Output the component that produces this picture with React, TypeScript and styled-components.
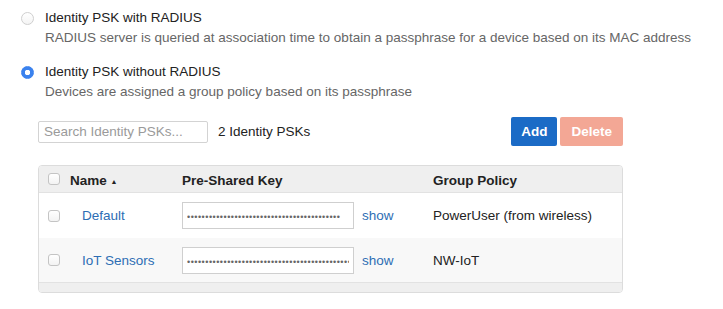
import React from "react";
import styled, { createGlobalStyle } from "styled-components";

const GlobalStyle = createGlobalStyle`
  body {
    margin: 0;
    background: #fff;
    font-family: "Liberation Sans", Arial, sans-serif;
    font-size: 13.5px;
    color: #333;
  }
`;

type Psk = { name: string; keyLength: number; policy: string };

const psks: Psk[] = [
  { name: "Default", keyLength: 42, policy: "PowerUser (from wireless)" },
  { name: "IoT Sensors", keyLength: 70, policy: "NW-IoT" },
];

function Radio({ checked }: { checked?: boolean }) {
  return <RadioDot $checked={checked} />;
}

export default function App() {
  return (
    <Page>
      <GlobalStyle />
      <Option>
        <Radio />
        <OptionText>
          <OptionLabel>Identity PSK with RADIUS</OptionLabel>
          <OptionDesc>
            RADIUS server is queried at association time to obtain a passphrase for a device based on its MAC address
          </OptionDesc>
        </OptionText>
      </Option>
      <Option $spaced>
        <Radio checked />
        <OptionText>
          <OptionLabel>Identity PSK without RADIUS</OptionLabel>
          <OptionDesc>Devices are assigned a group policy based on its passphrase</OptionDesc>
        </OptionText>
      </Option>

      <Section>
        <Toolbar>
          <SearchGroup>
            <SearchInput placeholder="Search Identity PSKs..." />
            <Count>2 Identity PSKs</Count>
          </SearchGroup>
          <Buttons>
            <Button $variant="primary">Add</Button>
            <Button $variant="danger">Delete</Button>
          </Buttons>
        </Toolbar>

        <Table>
          <HeaderRow>
            <CheckCell>
              <Checkbox />
            </CheckCell>
            <HeaderCell>
              Name <SortArrow>▲</SortArrow>
            </HeaderCell>
            <HeaderCell>Pre-Shared Key</HeaderCell>
            <HeaderCell>Group Policy</HeaderCell>
          </HeaderRow>
          {psks.map((psk, i) => (
            <Row key={psk.name} $striped={i % 2 === 1}>
              <CheckCell>
                <Checkbox />
              </CheckCell>
              <NameLink>{psk.name}</NameLink>
              <KeyCell>
                <KeyInput type="password" readOnly defaultValue={"x".repeat(psk.keyLength)} />
                <ShowLink>show</ShowLink>
              </KeyCell>
              <PolicyCell>{psk.policy}</PolicyCell>
            </Row>
          ))}
          <Footer />
        </Table>
      </Section>
    </Page>
  );
}

const Page = styled.div`
  padding: 8px 0 0 21px;
`;

const Option = styled.div<{ $spaced?: boolean }>`
  display: flex;
  align-items: flex-start;
  gap: 11px;
  margin-top: ${({ $spaced }) => ($spaced ? "15px" : "0")};
`;

const RadioDot = styled.span<{ $checked?: boolean }>`
  flex: none;
  box-sizing: border-box;
  width: 13px;
  height: 13px;
  margin-top: 3.5px;
  border-radius: 50%;
  border: 1px solid ${({ $checked }) => ($checked ? "#3b82ee" : "#cfcfcf")};
  background: ${({ $checked }) =>
    $checked
      ? "radial-gradient(circle, #fff 0 2.5px, #3b82ee 3px)"
      : "linear-gradient(#ffffff, #f4f4f4)"};
`;

const OptionText = styled.div`
  display: flex;
  flex-direction: column;
`;

const OptionLabel = styled.div`
  line-height: 20px;
  color: #222;
`;

const OptionDesc = styled.div`
  line-height: 19px;
  color: #666;
`;

const Section = styled.div`
  width: 585px;
  margin: 16px 0 0 17px;
`;

const Toolbar = styled.div`
  display: flex;
  justify-content: space-between;
  align-items: center;
`;

const SearchGroup = styled.div`
  display: flex;
  align-items: center;
  gap: 10px;
`;

const SearchInput = styled.input`
  box-sizing: border-box;
  width: 170px;
  height: 22px;
  padding: 0 5px;
  border: 1px solid #d3d3d3;
  border-radius: 2px;
  font-family: inherit;
  font-size: 13.5px;
  color: #333;
  outline: none;

  &::placeholder {
    color: #9a9a9a;
  }
`;

const Count = styled.span`
  color: #222;
`;

const Buttons = styled.div`
  display: flex;
  gap: 3px;
`;

const Button = styled.button<{ $variant: "primary" | "danger" }>`
  height: 29px;
  padding: 0 ${({ $variant }) => ($variant === "primary" ? "10px" : "11px")};
  border: none;
  border-radius: 2px;
  font-family: inherit;
  font-size: 13.5px;
  font-weight: bold;
  color: #fff;
  background: ${({ $variant }) => ($variant === "primary" ? "#1b6bc6" : "#f3a795")};
`;

const Table = styled.div`
  margin-top: 19px;
  border: 1px solid #dcdcdc;
  border-radius: 4px;
  overflow: hidden;
`;

const columns = "31px 112px 251px 1fr";

const HeaderRow = styled.div`
  display: grid;
  grid-template-columns: ${columns};
  align-items: center;
  height: 26px;
  background: #efefef;
  border-bottom: 1px solid #e2e2e2;
`;

const HeaderCell = styled.div`
  font-weight: bold;
  color: #222;
  padding-top: 3px;
`;

const SortArrow = styled.span`
  font-size: 7px;
  vertical-align: 1px;
`;

const Row = styled.div<{ $striped?: boolean }>`
  display: grid;
  grid-template-columns: ${columns};
  align-items: center;
  height: ${({ $striped }) => ($striped ? "44px" : "45px")};
  background: ${({ $striped }) => ($striped ? "#f8f8f8" : "#fff")};
`;

const CheckCell = styled.div`
  display: flex;
  padding-left: 9px;
`;

const Checkbox = styled.span`
  box-sizing: border-box;
  width: 12px;
  height: 12px;
  border: 1px solid #c4c4c4;
  border-radius: 3px;
  background: linear-gradient(#ffffff, #f3f3f3);
`;

const NameLink = styled.a`
  padding-left: 12px;
  color: #2d6eb4;
  cursor: pointer;
`;

const KeyCell = styled.div`
  display: flex;
  align-items: center;
  gap: 8px;
`;

const KeyInput = styled.input`
  box-sizing: border-box;
  width: 172px;
  height: 27px;
  padding: 3px 4px 0;
  border: 1px solid #cfcfcf;
  border-radius: 0;
  background: #fff;
  font-family: "Liberation Sans", Arial, sans-serif;
  font-size: 9px;
  letter-spacing: 0.5px;
  color: #666;
  outline: none;
`;

const ShowLink = styled.a`
  color: #2d6eb4;
  cursor: pointer;
`;

const PolicyCell = styled.div`
  color: #222;
`;

const Footer = styled.div`
  height: 9px;
  background: #efefef;
  border-top: 1px solid #e2e2e2;
`;
